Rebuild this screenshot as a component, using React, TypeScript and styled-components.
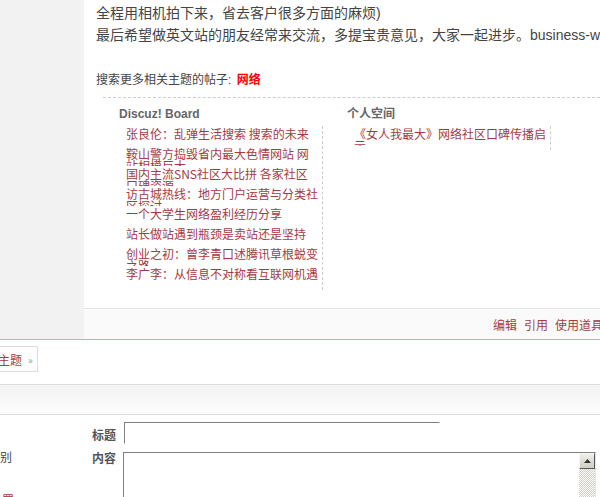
import React from 'react';
import styled, { createGlobalStyle } from 'styled-components';

const red = '#a63a42';

const GlobalStyle = createGlobalStyle`
  html, body { margin: 0; padding: 0; background: #fff; overflow: hidden; }
  body {
    font-family: "Liberation Sans", "Noto Sans CJK SC", sans-serif;
    font-size: 12px;
    color: #444;
  }
`;

const Page = styled.div`
  width: 600px;
  height: 497px;
  overflow: hidden;
`;

/* ---- post ---- */
const PostRow = styled.div`
  display: flex;
  border-bottom: 1px solid #d9a7ae;
`;
const Sidebar = styled.div`
  width: 84px;
  flex-shrink: 0;
  background: #f2f2f2;
`;
const Main = styled.div`
  flex: 1;
  min-width: 0;
  overflow: hidden;
`;
const PostBody = styled.div`
  height: 308px;
  box-sizing: border-box;
  padding: 2px 0 0 12px;
`;
const Para = styled.p`
  margin: 0;
  font-size: 14px;
  line-height: 22px;
  white-space: nowrap;
  color: #444;
`;
const SearchLine = styled.div`
  margin-top: 25px;
  line-height: 18px;
  color: #444;
`;
const Keyword = styled.a`
  margin-left: 2px;
  color: #f00;
  font-weight: bold;
  text-decoration: none;
`;
const Related = styled.div`
  display: flex;
  margin: 8px 0 0 7px;
  border-top: 1px dashed #ccc;
`;
const Column = styled.div`
  width: 228px;
  flex-shrink: 0;
  padding-left: 16px;
  box-sizing: border-box;
`;
const ColTitle = styled.h4`
  margin: 0;
  padding-top: 7px;
  font-size: 12px;
  line-height: 18px;
  font-weight: bold;
  color: #666;
`;
const ThreadList = styled.ul`
  list-style: none;
  margin: 3px 0 0 7px;
  padding: 0 4px 4px 0;
  width: 192px;
  border-right: 1px dashed #ccc;
`;
const ThreadItem = styled.li`
  height: 20px;
  padding-top: 2px;
  box-sizing: border-box;
  overflow: hidden;
  line-height: 12px;
  font-family: "Noto Sans CJK SC", sans-serif;
`;
const ThreadLink = styled.a`
  color: ${red};
  text-decoration: none;
`;
const PostFooter = styled.div`
  height: 30px;
  display: flex;
  align-items: center;
  padding-left: 409px;
  border-top: 1px solid #e3e3e3;
  background: #fafafa;
  white-space: nowrap;
`;
const FooterLink = styled.a`
  color: ${red};
  text-decoration: none;
  margin-right: 7px;
  font-family: "Noto Sans CJK SC", sans-serif;
`;

/* ---- actions ---- */
const ActionRow = styled.div`
  padding-top: 6px;
`;
const NewButton = styled.a`
  display: inline-flex;
  align-items: center;
  height: 26px;
  box-sizing: border-box;
  margin-left: -21px;
  padding: 0 4px 0 6px;
  border: 1px solid #ddd;
  background: #fdfdfd;
  color: ${red};
  font-family: "Noto Sans CJK SC", sans-serif;
  text-decoration: none;
`;
const Arrow = styled.span`
  margin-left: 6px;
  font-size: 10px;
  color: #999;
`;
const Band = styled.div`
  margin-top: 12px;
  height: 29px;
  border-top: 1px solid #ddd;
  border-bottom: 1px solid #ddd;
  background: linear-gradient(#f3f3f3, #fcfcfc);
`;

/* ---- reply form ---- */
const Form = styled.div`
  display: flex;
  margin-top: 7px;
`;
const LeftPanel = styled.div`
  width: 84px;
  flex-shrink: 0;
  padding-top: 28px;
  overflow: hidden;
  font-family: "Noto Sans CJK SC", sans-serif;
`;
const PanelText = styled.div`
  margin-left: -12px;
  line-height: 14px;
  color: #444;
`;
const PanelLink = styled.a`
  display: block;
  margin: 29px 0 0 -10px;
  line-height: 14px;
  color: ${red};
  text-decoration: none;
`;
const FieldGrid = styled.div`
  display: grid;
  grid-template-columns: 32px auto;
  column-gap: 8px;
  row-gap: 8px;
  align-items: start;
`;
const Label = styled.label<{ $top: number }>`
  padding-top: ${p => p.$top}px;
  text-align: right;
  font-weight: bold;
  line-height: 12px;
  color: #555;
  font-family: "Noto Sans CJK SC", sans-serif;
`;
const TitleInput = styled.input`
  width: 316px;
  height: 22px;
  box-sizing: border-box;
  margin: 0;
  padding: 2px;
  border: 1px solid;
  border-color: #808080 #fff #fff #808080;
  outline: none;
`;
const TextBox = styled.div`
  display: flex;
  width: 473px;
  height: 80px;
  box-sizing: border-box;
  margin-left: -1px;
  border: 1px solid;
  border-color: #808080 #e4e4e4 #e4e4e4 #808080;
`;
const TextArea = styled.textarea`
  flex: 1;
  margin: 0;
  padding: 2px;
  border: 0;
  outline: none;
  resize: none;
  overflow: hidden;
`;
const Scrollbar = styled.div`
  width: 16px;
  display: flex;
  flex-direction: column;
`;
const ScrollButton = styled.div`
  height: 16px;
  box-sizing: border-box;
  display: flex;
  align-items: center;
  justify-content: center;
  background: linear-gradient(#eeede8, #cfcdc4);
  border: 1px solid;
  border-color: #f8f8f8 #555 #555 #f8f8f8;
`;
const ScrollTrack = styled.div`
  flex: 1;
  background: repeating-conic-gradient(#cfcdc5 0 25%, #fff 0 50%) 0 0 / 2px 2px;
`;

const threads = [
  '张良伦：乱弹生活搜索 搜索的未来',
  '鞍山警方捣毁省内最大色情网站 网站相模巨大',
  '国内主流SNS社区大比拼 各家社区口碑资源',
  '访古城热线：地方门户运营与分类社区探讨',
  '一个大学生网络盈利经历分享',
  '站长做站遇到瓶颈是卖站还是坚持',
  '创业之初：曾李青口述腾讯草根蜕变之路',
  '李广李：从信息不对称看互联网机遇',
];

export default function App() {
  return (
    <Page>
      <GlobalStyle />
      <PostRow>
        <Sidebar />
        <Main>
          <PostBody>
            <Para>全程用相机拍下来，省去客户很多方面的麻烦)</Para>
            <Para>最后希望做英文站的朋友经常来交流，多提宝贵意见，大家一起进步。business-website.com</Para>
            <SearchLine>
              搜索更多相关主题的帖子: <Keyword href="#">网络</Keyword>
            </SearchLine>
            <Related>
              <Column>
                <ColTitle>Discuz! Board</ColTitle>
                <ThreadList>
                  {threads.map(t => (
                    <ThreadItem key={t}>
                      <ThreadLink href="#">{t}</ThreadLink>
                    </ThreadItem>
                  ))}
                </ThreadList>
              </Column>
              <Column>
                <ColTitle>个人空间</ColTitle>
                <ThreadList>
                  <ThreadItem>
                    <ThreadLink href="#">《女人我最大》网络社区口碑传播启示</ThreadLink>
                  </ThreadItem>
                </ThreadList>
              </Column>
            </Related>
          </PostBody>
          <PostFooter>
            <FooterLink href="#">编辑</FooterLink>
            <FooterLink href="#">引用</FooterLink>
            <FooterLink href="#">使用道具</FooterLink>
          </PostFooter>
        </Main>
      </PostRow>

      <ActionRow>
        <NewButton href="#">
          新主题<Arrow>»</Arrow>
        </NewButton>
      </ActionRow>
      <Band />

      <Form>
        <LeftPanel>
          <PanelText>类别</PanelText>
          <PanelLink href="#">设置</PanelLink>
        </LeftPanel>
        <FieldGrid>
          <Label $top={7}>标题</Label>
          <TitleInput />
          <Label $top={0}>内容</Label>
          <TextBox>
            <TextArea />
            <Scrollbar>
              <ScrollButton>
                <svg width="7" height="4" viewBox="0 0 7 4">
                  <path d="M3.5 0 L7 4 L0 4 Z" fill="#333" />
                </svg>
              </ScrollButton>
              <ScrollTrack />
            </Scrollbar>
          </TextBox>
        </FieldGrid>
      </Form>
    </Page>
  );
}
